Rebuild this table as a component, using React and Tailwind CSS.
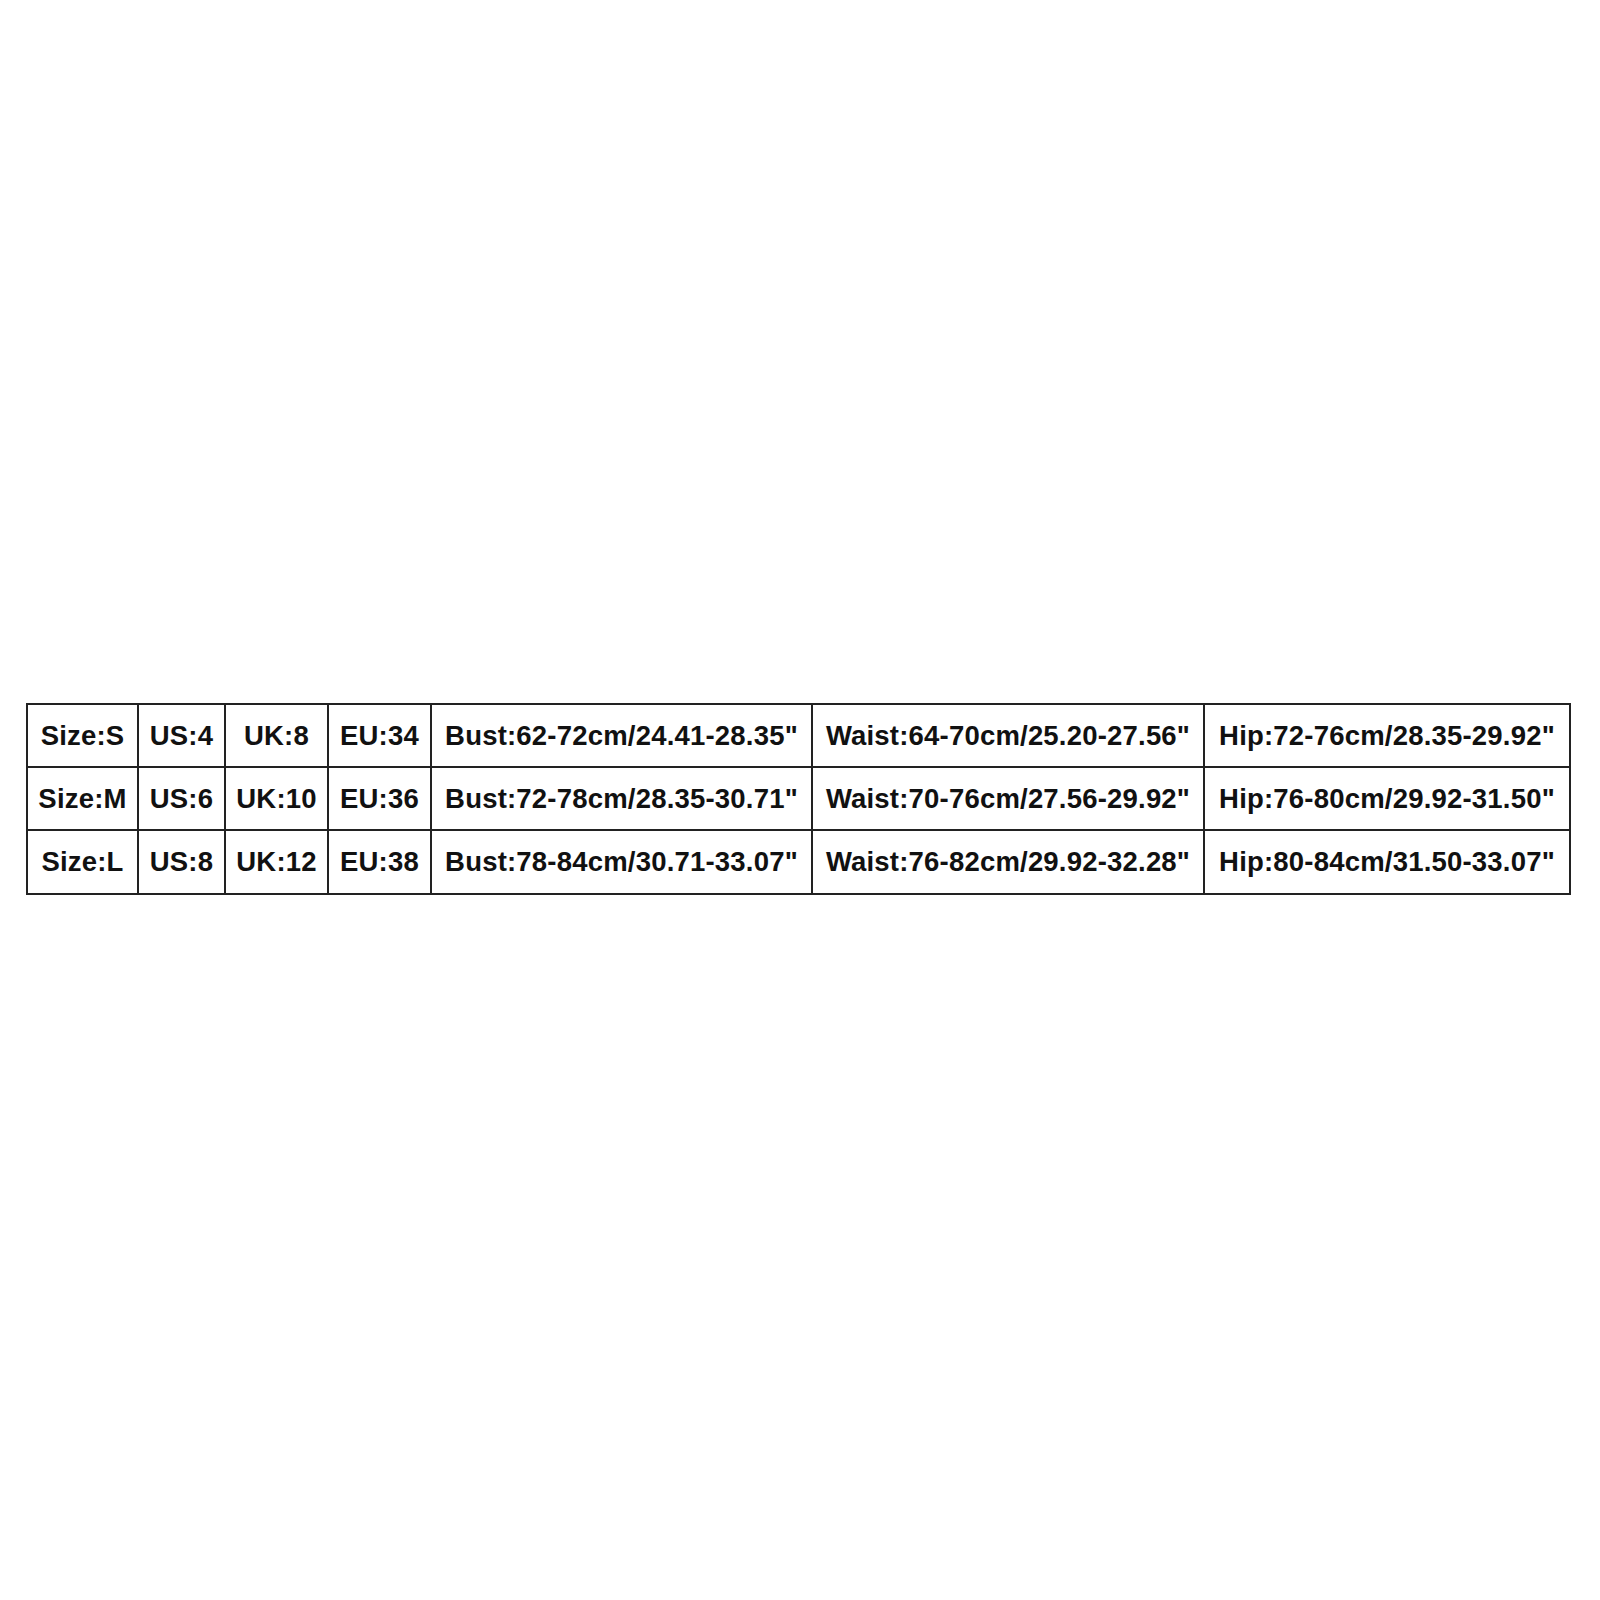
const rows = [
  ["Size:S", "US:4", "UK:8", "EU:34", "Bust:62-72cm/24.41-28.35''", "Waist:64-70cm/25.20-27.56''", "Hip:72-76cm/28.35-29.92''"],
  ["Size:M", "US:6", "UK:10", "EU:36", "Bust:72-78cm/28.35-30.71''", "Waist:70-76cm/27.56-29.92''", "Hip:76-80cm/29.92-31.50''"],
  ["Size:L", "US:8", "UK:12", "EU:38", "Bust:78-84cm/30.71-33.07''", "Waist:76-82cm/29.92-32.28''", "Hip:80-84cm/31.50-33.07''"],
];

const widths = [111, 87, 103, 103, 381, 392, 366];

export default function App() {
  return (
    <div className="h-[1600px] w-[1600px] bg-white pl-[26px] pt-[703px]">
      <table
        className="table-fixed border-collapse text-[#111]"
        style={{ fontFamily: '"Liberation Sans", Arial, sans-serif' }}
      >
        <colgroup>
          {widths.map((w, i) => (
            <col key={i} style={{ width: w }} />
          ))}
        </colgroup>
        <tbody>
          {rows.map((row, r) => (
            <tr key={r} className={r === 2 ? "h-[64px]" : "h-[63px]"}>
              {row.map((cell, c) => (
                <td
                  key={c}
                  className="whitespace-nowrap border-2 border-[#222] p-0 text-center align-middle text-[27.5px] font-bold tracking-[0.2px]"
                >
                  {cell.replace("''", '"')}
                </td>
              ))}
            </tr>
          ))}
        </tbody>
      </table>
    </div>
  );
}
